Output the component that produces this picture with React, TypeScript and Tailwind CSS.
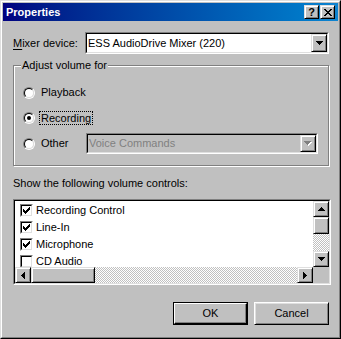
import React from "react";

const raised =
  "border border-t-[#dfdfdf] border-l-[#dfdfdf] border-r-black border-b-black shadow-[inset_1px_1px_0_#fff,inset_-1px_-1px_0_#808080] bg-[#c0c0c0]";
const checker =
  "bg-[repeating-conic-gradient(#fff_0_25%,#c0c0c0_0_50%)] bg-size-[2px_2px]";

function Sunken({ className = "", inner = "", children }: { className?: string; inner?: string; children?: React.ReactNode }) {
  return (
    <div className={"border border-t-[#808080] border-l-[#808080] border-r-white border-b-white " + className}>
      <div className={"h-full border border-t-black border-l-black border-r-[#dfdfdf] border-b-[#dfdfdf] " + inner}>{children}</div>
    </div>
  );
}

function Arrow({ dir, color = "#000" }: { dir: "down" | "up" | "left" | "right"; color?: string }) {
  if (dir === "down" || dir === "up") {
    const d =
      dir === "down"
        ? "M0 0h7v1H0zM1 1h5v1H1zM2 2h3v1H2zM3 3h1v1H3z"
        : "M3 0h1v1H3zM2 1h3v1H2zM1 2h5v1H1zM0 3h7v1H0z";
    return (
      <svg width="7" height="4" viewBox="0 0 7 4" fill={color}>
        <path d={d} />
      </svg>
    );
  }
  const d =
    dir === "left"
      ? "M3 0h1v7H3zM2 1h1v5H2zM1 2h1v3H1zM0 3h1v1H0z"
      : "M0 0h1v7H0zM1 1h1v5H1zM2 2h1v3H2zM3 3h1v1H3z";
  return (
    <svg width="4" height="7" viewBox="0 0 4 7" fill={color}>
      <path d={d} />
    </svg>
  );
}

function DisabledDown() {
  return (
    <svg width="8" height="5" viewBox="0 0 8 5">
      <path fill="#fff" d="M1 1h7v1H1zM2 2h5v1H2zM3 3h3v1H3zM4 4h1v1H4z" />
      <path fill="#808080" d="M0 0h7v1H0zM1 1h5v1H1zM2 2h3v1H2zM3 3h1v1H3z" />
    </svg>
  );
}

function ScrollBtn({ dir }: { dir: "down" | "up" | "left" | "right" }) {
  return (
    <div className={raised + " w-[16px] h-[16px] shrink-0 flex items-center justify-center"}>
      <Arrow dir={dir} />
    </div>
  );
}

function Radio({ checked }: { checked?: boolean }) {
  return (
    <div className="w-[12px] h-[12px] shrink-0 rounded-full border border-t-[#808080] border-l-[#808080] border-r-white border-b-white">
      <div className="w-full h-full rounded-full bg-white border border-t-black border-l-black border-r-[#dfdfdf] border-b-[#dfdfdf] flex items-center justify-center">
        {checked && <div className="w-[4px] h-[4px] rounded-full bg-black" />}
      </div>
    </div>
  );
}

function Check({ checked, label }: { checked?: boolean; label: string }) {
  return (
    <div className="h-[17px] flex items-center pl-[5px]">
      <Sunken className="w-[13px] h-[13px] shrink-0" inner="bg-white flex items-center justify-center">
        {checked && (
          <svg width="7" height="7" viewBox="0 0 7 7" fill="#000">
            <path d="M6 0h1v1H6zM5 1h2v1H5zM0 2h1v1H0zM4 2h3v1H4zM0 3h2v1H0zM3 3h3v1H3zM0 4h5v1H0zM1 5h3v1H1zM2 6h1v1H2z" />
          </svg>
        )}
      </Sunken>
      <span className="ml-[3px]">{label}</span>
    </div>
  );
}

export default function App() {
  return (
    <div className="w-[341px] h-[339px] bg-[#c0c0c0] border border-t-[#dfdfdf] border-l-[#dfdfdf] border-r-black border-b-black text-[11px] leading-[13px] text-black font-['Liberation_Sans',Arial,sans-serif]">
      <div className="h-full flex flex-col border border-t-white border-l-white border-r-[#808080] border-b-[#808080] p-px">
        {/* Title bar */}
        <div className="h-[18px] shrink-0 flex items-center justify-between pl-[3px] pr-[3px] bg-linear-to-r from-[#000080] to-[#1084d0]">
          <span className="text-white font-bold">Properties</span>
          <div className="flex gap-px">
            <div className={raised + " w-[15px] h-[14px] flex items-center justify-center font-bold text-[11px] leading-none"}>?</div>
            <div className={raised + " w-[15px] h-[14px] flex items-center justify-center"}>
              <svg width="8" height="7" viewBox="0 0 8 7" fill="#000">
                <path d="M0 0h2v1H0zM6 0h2v1H6zM1 1h2v1H1zM5 1h2v1H5zM2 2h4v1H2zM3 3h2v1H3zM2 4h4v1H2zM1 5h2v1H1zM5 5h2v1H5zM0 6h2v1H0zM6 6h2v1H6z" />
              </svg>
            </div>
          </div>
        </div>

        <div className="flex-1 pl-[10px] pr-[7px]">
          {/* Mixer device */}
          <div className="mt-[11px] h-[22px] flex items-center">
            <span className="w-[72px] shrink-0">
              <span className="underline underline-offset-2">M</span>ixer device:
            </span>
            <Sunken className="w-[244px] h-[22px]" inner="bg-white flex items-center">
              <span className="flex-1 pl-px">ESS AudioDrive Mixer (220)</span>
              <div className={raised + " w-[16px] h-full flex items-center justify-center"}>
                <Arrow dir="down" />
              </div>
            </Sunken>
          </div>

          {/* Adjust volume for */}
          <fieldset className="mt-[5px] w-[316px] border border-[#808080] pl-[9px] pt-[8px] pb-[9px] shadow-[inset_1px_1px_0_#fff,1px_1px_0_#fff]">
            <legend className="-ml-[2px] px-[1px] bg-[#c0c0c0]">Adjust volume for</legend>
            <div className="h-[25px] flex items-center">
              <Radio />
              <span className="ml-[6px]">Playback</span>
            </div>
            <div className="h-[25px] flex items-center">
              <Radio checked />
              <span className="ml-[4px] px-px border border-dotted border-black leading-[12px]">Recording</span>
            </div>
            <div className="mt-px h-[25px] flex items-center">
              <Radio />
              <span className="ml-[6px] w-[45px] shrink-0">Other</span>
              <Sunken className="w-[232px] h-[21px]" inner="bg-[#c0c0c0] flex items-center">
                <span className="flex-1 pl-px text-[#808080]">Voice Commands</span>
                <div className={raised + " w-[16px] h-full flex items-center justify-center"}>
                  <DisabledDown />
                </div>
              </Sunken>
            </div>
          </fieldset>

          <div className="mt-[11px]">Show the following volume controls:</div>

          {/* List */}
          <Sunken className="mt-[9px] w-[318px] h-[86px]" inner="flex flex-col">
            <div className="flex-1 flex min-h-0">
              <div className="flex-1 bg-white overflow-hidden pt-px">
                <Check checked label="Recording Control" />
                <Check checked label="Line-In" />
                <Check checked label="Microphone" />
                <Check label="CD Audio" />
              </div>
              <div className="w-[16px] flex flex-col">
                <ScrollBtn dir="up" />
                <div className={raised + " h-[17px] shrink-0"} />
                <div className={"flex-1 " + checker} />
                <ScrollBtn dir="down" />
              </div>
            </div>
            <div className="h-[16px] flex shrink-0">
              <ScrollBtn dir="left" />
              <div className={raised + " w-[64px] shrink-0"} />
              <div className={"flex-1 " + checker} />
              <ScrollBtn dir="right" />
              <div className="w-[16px] bg-[#c0c0c0]" />
            </div>
          </Sunken>

          {/* Buttons */}
          <div className="mt-[17px] flex justify-end gap-[6px] pr-[2px]">
            <div className="w-[75px] h-[23px] border border-black">
              <div className="h-full border border-t-white border-l-white border-r-black border-b-black shadow-[inset_-1px_-1px_0_#808080] flex items-center justify-center">
                OK
              </div>
            </div>
            <div className="w-[75px] h-[23px] border border-t-white border-l-white border-r-black border-b-black shadow-[inset_1px_1px_0_#dfdfdf,inset_-1px_-1px_0_#808080] flex items-center justify-center">
              Cancel
            </div>
          </div>
        </div>
      </div>
    </div>
  );
}
